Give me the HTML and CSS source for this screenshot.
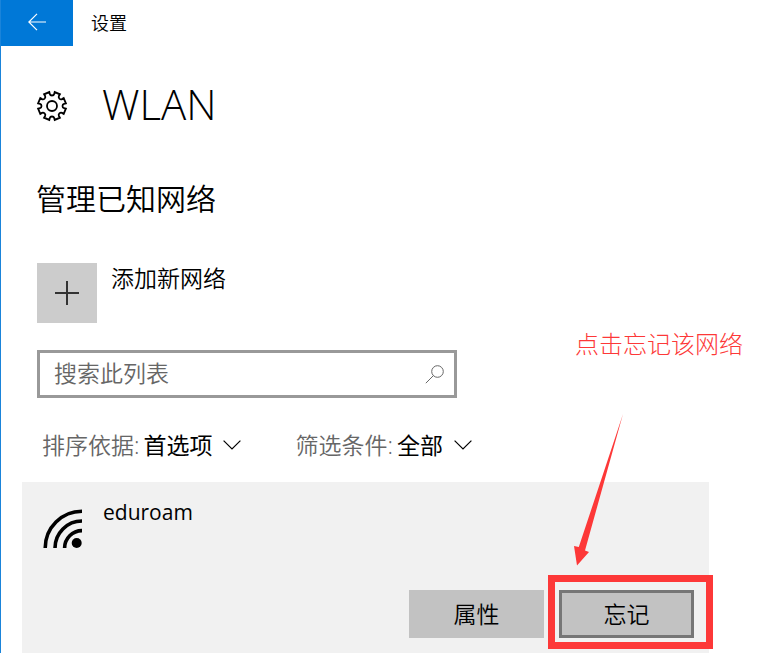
FILE: index.html
```html
<!DOCTYPE html>
<html lang="zh-CN">
<head>
<meta charset="utf-8">
<title>设置</title>
<link rel="stylesheet" href="styles.css">
</head>
<body>
<header class="topbar">
  <button class="back" type="button" aria-label="返回">
    <svg width="18" height="18" viewBox="0 0 18 18"><path d="M18 9H1M9 .8 .8 9 9 17.2"/></svg>
  </button>
  <span class="app-name">设置</span>
</header>
<main>
  <div class="page-title">
    <svg class="gear" width="32" height="32" viewBox="-16 -16 32 32"><path d="M-2.7-13.9L-2.2-12Q-1.8-10.5 0-10.5Q1.8-10.5 2.2-12L2.7-13.9L7.9-11.7L6.9-10Q6.2-8.7 7.4-7.4Q8.7-6.2 10-6.9L11.7-7.9L13.9-2.7L12-2.2Q10.5-1.8 10.5 0Q10.5 1.8 12 2.2L13.9 2.7L11.7 7.9L10 6.9Q8.7 6.2 7.4 7.4Q6.2 8.7 6.9 10L7.9 11.7L2.7 13.9L2.2 12Q1.8 10.5 0 10.5Q-1.8 10.5-2.2 12L-2.7 13.9L-7.9 11.7L-6.9 10Q-6.2 8.7-7.4 7.4Q-8.7 6.2-10 6.9L-11.7 7.9L-13.9 2.7L-12 2.2Q-10.5 1.8-10.5 0Q-10.5-1.8-12-2.2L-13.9-2.7L-11.7-7.9L-10-6.9Q-8.7-6.2-7.4-7.4Q-6.2-8.7-6.9-10L-7.9-11.7Z"/><circle r="5"/></svg>
    <h1>WLAN</h1>
  </div>
  <h2>管理已知网络</h2>
  <div class="add-row">
    <button class="add" id="add" type="button" aria-labelledby="add-label">
      <svg width="24" height="24" viewBox="0 0 24 24"><path d="M0 12H24M12 0V24"/></svg>
    </button>
    <label id="add-label" for="add">添加新网络</label>
  </div>
  <div class="search">
    <input type="text" placeholder="搜索此列表" aria-label="搜索此列表">
    <svg width="20" height="20" viewBox="0 0 20 20"><circle cx="12.5" cy="7.5" r="5.8"/><path d="M8.4 11.6 .8 19.2"/></svg>
  </div>
  <div class="filters">
    <div class="filter">
      <label for="sort">排序依据:</label>
      <select id="sort"><option>首选项</option></select>
      <svg width="18" height="10" viewBox="0 0 18 10"><path d="M.6.6 9 9 17.4.6"/></svg>
    </div>
    <div class="filter">
      <label for="kind">筛选条件:</label>
      <select id="kind"><option>全部</option></select>
      <svg width="18" height="10" viewBox="0 0 18 10"><path d="M.6.6 9 9 17.4.6"/></svg>
    </div>
  </div>
  <section class="network">
    <div class="network-name">
      <svg class="wifi" width="40" height="40" viewBox="0 0 40 40"><path d="M3.2 39A36.800 36.800 0 0 1 40 2.2M13 39A27 27 0 0 1 40 12M22.600 39A17.400 17.400 0 0 1 40 21.600"/><circle cx="34.700" cy="34" r="5"/></svg>
      <span>eduroam</span>
    </div>
    <div class="actions">
      <button type="button">属性</button>
      <button class="forget" type="button">忘记</button>
    </div>
    <div class="frame"></div>
    <p class="note">点击忘记该网络</p>
    <svg class="arrow" width="50" height="152" viewBox="0 0 50 152"><path d="M49 0 4.800 133 0 132 3 151.500 15 138 11 136.500Z"/></svg>
  </section>
</main>
</body>
</html>
```
FILE: styles.css
```css
* { box-sizing: border-box; }
body {
  margin: 0;
  min-height: 100vh;
  display: flex;
  flex-direction: column;
  border-left: 1px solid #1a84da;
  background: #fff;
  color: #000;
  font-family: "Open Sans", "Noto Sans CJK SC", sans-serif;
  font-size: 23px;
  font-weight: 350;
  line-height: 30px;
}
h1, h2, p { margin: 0; }
button, input, select { font: inherit; color: inherit; border: 0; border-radius: 0; }
svg { display: block; flex: none; fill: none; stroke: currentColor; }
.topbar { display: flex; align-items: center; height: 46px; }
.back {
  display: flex;
  align-items: center;
  justify-content: center;
  width: 72px;
  height: 46px;
  padding: 0 0 2px;
  background: #0078d7;
  color: #fff;
}
.back svg { stroke-width: 1.2; }
.app-name { margin-left: 18px; font-size: 18px; }
main { flex: 1; display: flex; flex-direction: column; }
.page-title { display: flex; align-items: center; gap: 34px; margin: 28px 0 0 35px; height: 64px; }
.gear { stroke-width: 1.8; }
h1 { padding-bottom: 4px; font-size: 42px; line-height: 60px; font-weight: 350; }
h2 { margin: 39px 0 0 35px; font-size: 30px; line-height: 44px; font-weight: 350; }
.add-row { display: flex; align-items: flex-start; gap: 14px; margin: 42px 0 0 36px; }
.add {
  display: flex;
  align-items: center;
  justify-content: center;
  width: 60px;
  height: 60px;
  padding: 0;
  background: #ccc;
  color: #333;
}
.add svg { stroke-width: 2; }
.search {
  display: flex;
  align-items: center;
  width: 420px;
  max-width: 90%;
  height: 48px;
  margin: 27px 0 0 36px;
  padding: 0 9px 0 14px;
  border: 3px solid #999;
  color: #666;
}
.search input { flex: 1; min-width: 0; padding: 0 0 2px; background: none; outline: 0; }
.search input::placeholder { color: #666; opacity: 1; }
.filters { display: flex; gap: 54px; margin: 32px 0 0 41px; }
.filter { display: flex; align-items: center; gap: 4px; }
.filter label { color: #666; }
.filter select { appearance: none; padding: 0; background: none; font-weight: 400; }
.filter svg { margin-left: 7px; stroke-width: 1.2; pointer-events: none; }
.network {
  position: relative;
  flex: 1;
  display: flex;
  flex-direction: column;
  gap: 42px;
  margin: 22px 57px 0 21px;
  padding: 15px 15px 15px 20px;
  background: #f1f1f1;
}
.network-name { display: flex; align-items: flex-start; gap: 21px; height: 51px; font-size: 21px; font-weight: 400; }
.wifi { margin-top: 12px; stroke-width: 3.6; }
.wifi circle { fill: #000; stroke: none; }
.actions { display: flex; justify-content: flex-end; gap: 15px; }
.actions button { width: 135px; height: 48px; padding: 0; background: #c2c2c2; }
.actions .forget { border: 3px solid #767676; }
.frame {
  position: absolute;
  top: 93px;
  right: -4px;
  width: 165px;
  height: 74px;
  border: 7px solid #fd3838;
  pointer-events: none;
}
.note {
  position: absolute;
  top: -153px;
  right: -34px;
  color: #fd3838;
  font-size: 24px;
  font-weight: 300;
  white-space: nowrap;
}
.arrow { position: absolute; top: -68px; right: 85px; fill: #fd3838; stroke: none; }
```
